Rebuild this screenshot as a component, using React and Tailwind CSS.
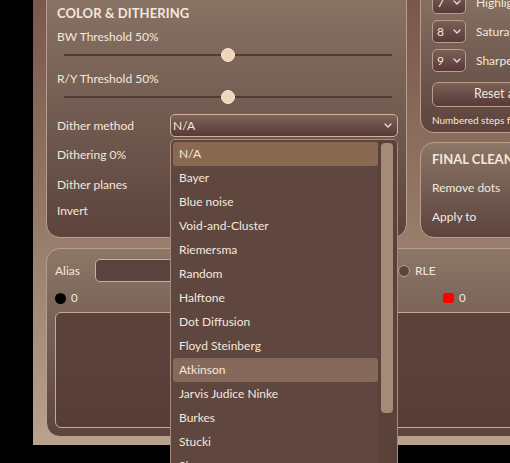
import React from "react";

const METHODS = [
  "N/A",
  "Bayer",
  "Blue noise",
  "Void-and-Cluster",
  "Riemersma",
  "Random",
  "Halftone",
  "Dot Diffusion",
  "Floyd Steinberg",
  "Atkinson",
  "Jarvis Judice Ninke",
  "Burkes",
  "Stucki",
  "Sierra",
  "Sierra Lite",
];

function Chevron() {
  return (
    <svg width="8" height="5" viewBox="0 0 8 5" className="shrink-0">
      <path d="M1 1 L4 4 L7 1" fill="none" stroke="#f1e4d6" strokeWidth="1.2" strokeLinecap="round" strokeLinejoin="round" />
    </svg>
  );
}

function Slider() {
  // 50% slider, track with thumb in the middle
  return (
    <div className="h-[16px] ml-[7px] w-[328px] flex items-center">
      <div className="flex-1 h-[2px] bg-[#553a34]" />
      <div className="w-[14px] h-[14px] rounded-full bg-[#efd6bb] border border-[#f7e6d2] shrink-0" />
      <div className="flex-1 h-[2px] bg-[#553a34]" />
    </div>
  );
}

function StepSelect({ value, label }) {
  return (
    <div className="flex items-center h-[23px]">
      <div className="w-[34px] h-[23px] rounded-[5px] border border-[#b99c8a] bg-gradient-to-b from-[#7c6157] to-[#57393a] flex items-center justify-between pl-[4px] pr-[4px]">
        <span className="text-[12px]">{value}</span>
        <Chevron />
      </div>
      <span className="ml-[10px] text-[12px] whitespace-nowrap">{label}</span>
    </div>
  );
}

function MethodPopup() {
  return (
    <div className="absolute left-0 top-[25px] z-50 w-[228px] h-[340px] rounded-[5px] border border-[#a68c7e] bg-[#5f463f] flex overflow-hidden">
      <div className="w-[207px] pl-[2px] pt-[2px] flex flex-col">
        {METHODS.map((m) => (
          <div
            key={m}
            className={
              "h-[24px] shrink-0 flex items-center px-[6px] rounded-[3px] text-[12px] text-[#f3e8dc] " +
              (m === "N/A" ? "bg-[#8a6953]" : m === "Atkinson" ? "bg-[#86695b]" : "")
            }
          >
            {m}
          </div>
        ))}
      </div>
      <div className="flex-1 bg-[#5a413a] pt-[3px] pl-[3px]">
        <div className="w-[12px] h-[270px] rounded-[4px] bg-[#a48b76]" />
      </div>
    </div>
  );
}

export default function App() {
  return (
    <div
      className="w-[510px] h-[463px] overflow-hidden bg-black flex flex-col text-[#f3e8dc]"
      style={{ fontFamily: "'Segoe UI', Lato, 'Liberation Sans', sans-serif" }}
    >
      <div className="flex h-[445px] shrink-0">
        <div className="w-[33px] shrink-0 bg-black" />
        <div className="w-[600px] shrink-0 h-[445px] bg-gradient-to-b from-[#7a574b] via-[#957a69] to-[#b8a38d] pl-[13px] flex flex-col">
          <div className="flex -mt-[20px]">
            {/* COLOR & DITHERING */}
            <div className="w-[361px] h-[258px] shrink-0 rounded-[14px] border border-[#b89e8a] bg-gradient-to-b from-[#8b7667] to-[#5c443d] pl-[10px] pt-[23px] flex flex-col">
              <div className="h-[20px] flex items-center font-bold text-[13px] tracking-[0.1px]">COLOR &amp; DITHERING</div>
              <div className="mt-[3px] h-[20px] flex items-center text-[12px]">BW Threshold 50%</div>
              <Slider />
              <div className="mt-[6px] h-[20px] flex items-center text-[12px]">R/Y Threshold 50%</div>
              <Slider />
              <div className="mt-[9px] h-[23px] flex items-center">
                <span className="w-[113px] text-[12px]">Dither method</span>
                <div className="relative">
                  <div className="w-[228px] h-[23px] rounded-[5px] border border-[#d2b29b] bg-gradient-to-b from-[#7e6358] to-[#583a38] flex items-center justify-between pl-[2px] pr-[5px]">
                    <span className="text-[12px]">N/A</span>
                    <Chevron />
                  </div>
                  <MethodPopup />
                </div>
              </div>
              <div className="mt-[8px] h-[20px] flex items-center text-[12px]">Dithering 0%</div>
              <div className="mt-[10px] h-[20px] flex items-center text-[12px]">Dither planes</div>
              <div className="mt-[6px] h-[20px] flex items-center text-[12px]">Invert</div>
            </div>

            {/* right column */}
            <div className="ml-[13px] w-[180px] shrink-0 flex flex-col">
              <div className="h-[153px] rounded-[14px] border border-[#b89e8a] bg-gradient-to-b from-[#8b7667] to-[#5c443d] pl-[11px] pt-[10px] flex flex-col">
                <StepSelect value="7" label="Highlights" />
                <div className="mt-[6px]"><StepSelect value="8" label="Saturation" /></div>
                <div className="mt-[6px]"><StepSelect value="9" label="Sharpen" /></div>
                <div className="mt-[10px] w-[130px] h-[25px] rounded-[6px] border border-[#b99c8a] bg-gradient-to-b from-[#7c6157] to-[#57393a] flex items-center justify-center text-[12.5px]">
                  Reset all
                </div>
                <div className="mt-[6px] h-[14px] flex items-center text-[10px] whitespace-nowrap">Numbered steps follow the pipeline</div>
              </div>
              <div className="mt-[9px] h-[96px] rounded-[14px] border border-[#b89e8a] bg-gradient-to-b from-[#8b7667] to-[#5c443d] pl-[11px] pt-[7px] flex flex-col">
                <div className="h-[20px] flex items-center font-bold text-[13px] whitespace-nowrap">FINAL CLEANUP</div>
                <div className="mt-[8px] h-[20px] flex items-center text-[12px]">Remove dots</div>
                <div className="mt-[9px] h-[20px] flex items-center text-[12px]">Apply to</div>
              </div>
            </div>
          </div>

          {/* output panel */}
          <div className="mt-[10px] w-[540px] h-[189px] shrink-0 rounded-[14px] border border-[#b89e8a] bg-gradient-to-b from-[#8b7667] to-[#5c443d] pl-[8px] pt-[10px] flex flex-col">
            <div className="h-[23px] flex items-center">
              <span className="w-[40px] text-[12px]">Alias</span>
              <div className="w-[293px] h-[23px] rounded-[5px] border border-[#c8ae9c] bg-[#5b433d]" />
              <div className="ml-[10px] w-[12px] h-[12px] rounded-full border border-[#b8a393] bg-[#5a4540]" />
              <span className="ml-[5px] text-[12px]">RLE</span>
            </div>
            <div className="mt-[8px] h-[16px] flex items-center">
              <div className="w-[388px] flex items-center">
                <div className="w-[11px] h-[11px] rounded-full bg-black" />
                <span className="ml-[5px] text-[11.5px]">0</span>
              </div>
              <div className="w-[11px] h-[10px] rounded-[2px] bg-[#ff0000]" />
              <span className="ml-[5px] text-[11.5px]">0</span>
            </div>
            <div className="mt-[6px] h-[116px] rounded-[6px] border border-[#c4ab99] bg-gradient-to-b from-[#5d423c] to-[#573d38]" />
          </div>
        </div>
      </div>
      <div className="flex-1 bg-black" />
    </div>
  );
}
